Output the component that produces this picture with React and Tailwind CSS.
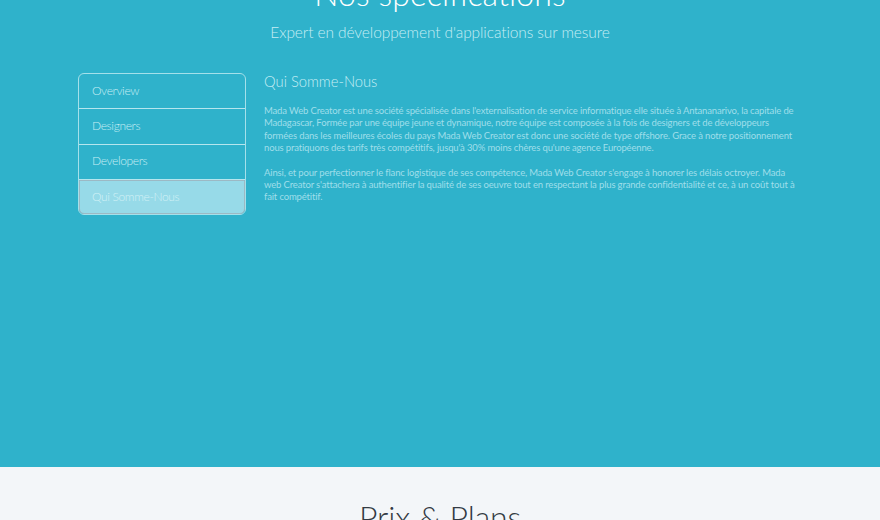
export default function App() {
  const items = ["Overview", "Designers", "Developers"];
  return (
    <div className="h-[520px] w-[880px] overflow-hidden bg-[#2fb2cb] font-['Lato',sans-serif] font-light">
      <div className="h-[467px] overflow-hidden">
        <h1 className="mt-[-26px] text-center text-[32px] leading-[40px] tracking-[0.1px] font-light text-white">Nos spécifications</h1>
        <p className="mt-[6px] text-center text-[15.5px] leading-[24px] tracking-[-0.1px] text-[#c5edf4]">Expert en développement d'applications sur mesure</p>
        <div className="mt-[29px] flex pl-[78px]">
          <ul className="h-[142px] w-[168px] rounded-[6px] border border-[#a5e0ea] text-[12px] tracking-[-0.35px] text-[#c8eef4]">
            {items.map((t) => (
              <li key={t} className="flex h-[35.3px] items-center border-b border-[#b5e6ee] pb-[1px] pl-[13px]">{t}</li>
            ))}
            <li className="flex h-[34.5px] items-center rounded-b-[5px] border border-[#9cb9c4] bg-[#97dae8] pb-[1px] pl-[12px] text-[#d3f1f6]">Qui Somme-Nous</li>
          </ul>
          <div className="ml-[18px] w-[536px]">
            <h2 className="mt-[-1px] text-[14.75px] leading-[18px] text-[#c5edf4]">Qui Somme-Nous</h2>
            <div className="mt-[15px] whitespace-nowrap text-[9.5px] leading-[12.35px] tracking-[-0.15px] text-[#9fdeea] font-normal">
              <p>Mada Web Creator est une société spécialisée dans l'externalisation de service informatique elle située à Antananarivo, la capitale de<br />Madagascar, Formée par une équipe jeune et dynamique, notre équipe est composée à la fois de designers et de développeurs<br />formées dans les meilleures écoles du pays Mada Web Creator est donc une société de type offshore. Grace à notre positionnement<br />nous pratiquons des tarifs très compétitifs, jusqu'à 30% moins chères qu'une agence Européenne.</p>
              <p className="mt-[12.35px]">Ainsi, et pour perfectionner le flanc logistique de ses compétence, Mada Web Creator s'engage à honorer les délais octroyer. Mada<br />web Creator s'attachera à authentifier la qualité de ses oeuvre tout en respectant la plus grande confidentialité et ce, à un coût tout à<br />fait compétitif.</p>
            </div>
          </div>
        </div>
      </div>
      <div className="h-[53px] bg-[#f3f6f9] pt-[30px]">
        <h2 className="text-center text-[32px] leading-[40px] tracking-[-0.1px] font-light text-[#333b44]">Prix &amp; Plans</h2>
      </div>
    </div>
  );
}
